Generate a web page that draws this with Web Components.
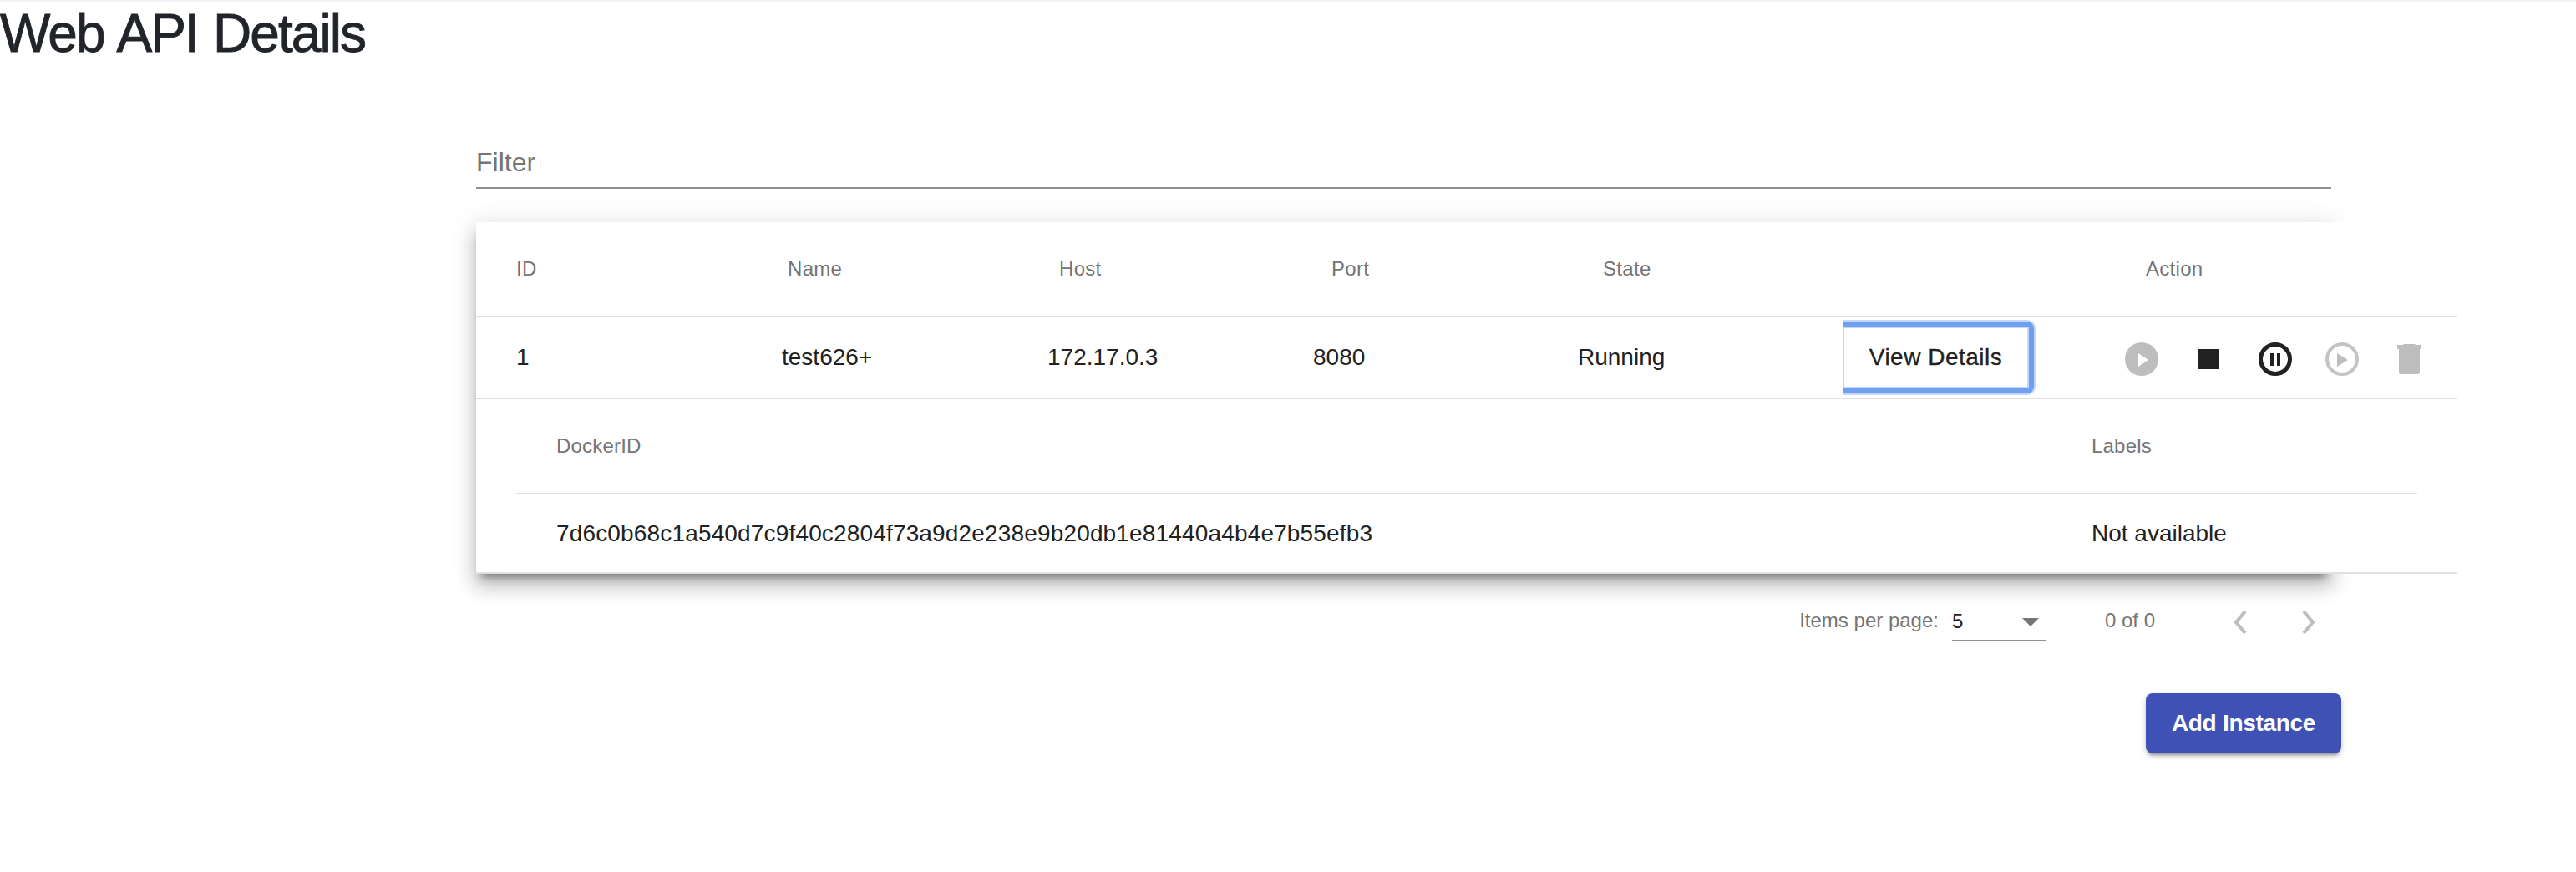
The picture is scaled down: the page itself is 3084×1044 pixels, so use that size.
<!DOCTYPE html>
<html>
<head>
<meta charset="utf-8">
<title>Web API Details</title>
<style>
  html, body { margin: 0; padding: 0; background: #fff; }
  body { font-family: "Liberation Sans", Arial, sans-serif; overflow: hidden; height: 1044px; border-top: 2px solid #f3f3f3; box-sizing: border-box; }
</style>
</head>
<body>
<page-title>Web API Details</page-title>
<instance-panel></instance-panel>

<script>
const ICONS = {
    play: '<svg width="40" height="40" viewBox="0 0 40 40"><circle cx="20" cy="20" r="20" fill="#bdbdbd"/><path d="M16 13l12 8-12 8z" fill="#fff"/></svg>',
    stop: '<svg width="40" height="40" viewBox="0 0 40 40"><rect x="8" y="8" width="24" height="24" fill="#212121"/></svg>',
    pause: '<svg width="40" height="40" viewBox="0 0 40 40"><circle cx="20" cy="20" r="17.5" fill="none" stroke="#212121" stroke-width="5"/><rect x="14" y="13" width="4" height="15" fill="#212121"/><rect x="22" y="13" width="4" height="15" fill="#212121"/></svg>',
    replay: '<svg width="40" height="40" viewBox="0 0 40 40"><circle cx="20" cy="20" r="18" fill="none" stroke="#c4c4c4" stroke-width="4"/><path d="M14 13l13 8-13 8z" fill="#bdbdbd"/></svg>',
    trash: '<svg width="40" height="40" viewBox="0 0 40 40"><path d="M6 8V3h7l1-1h13l1 1h7v5zM8 8h25v27a3 3 0 0 1-3 3H11a3 3 0 0 1-3-3z" fill="#bdbdbd"/></svg>',
    prev: '<svg width="20" height="30" viewBox="0 0 20 30"><path d="M16 2L5 15l11 13" fill="none" stroke="#bdbdbd" stroke-width="4"/></svg>',
    next: '<svg width="20" height="30" viewBox="0 0 20 30"><path d="M4 2l11 13L4 28" fill="none" stroke="#bdbdbd" stroke-width="4"/></svg>'
};

class PageTitle extends HTMLElement {
    constructor() {
        super();
        this.attachShadow({ mode: 'open' });
        this.shadowRoot.innerHTML = `
            <style>
                :host { display: block; height: 158px; }
                h1 {
                    margin: 0;
                    font: 400 64px/77px "Liberation Sans", Arial, sans-serif;
                    letter-spacing: -1.95px;
                    word-spacing: 2.5px;
                    -webkit-text-stroke: 0.9px #212529;
                    color: #212529;
                }
            </style>
            <h1><slot></slot></h1>
        `;
    }
}

class FilterField extends HTMLElement {
    constructor() {
        super();
        this.attachShadow({ mode: 'open' });
        this.shadowRoot.innerHTML = `
            <style>
                :host {
                    display: flex;
                    align-items: center;
                    box-sizing: border-box;
                    height: 66px;
                    padding-top: 4px;
                    border-bottom: 2px solid #8f8f8f;
                    font-size: 32px;
                    color: #757575;
                }
            </style>
            <span>Filter</span>
        `;
    }
}

class TableRow extends HTMLElement {
    constructor() {
        super();
        this.attachShadow({ mode: 'open' });
        const type = this.getAttribute('type');
        this.shadowRoot.innerHTML = `
            <style>
                :host {
                    display: flex;
                    align-items: center;
                    box-sizing: border-box;
                    width: 2372px;
                    padding: 0 48px;
                    background: #fff;
                    border-bottom: 2px solid #e0e0e0;
                    height: ${type === 'header' ? 114 : 98}px;
                    font-size: ${type === 'header' ? 24 : 28}px;
                    letter-spacing: ${type === 'header' ? 0.3 : 0}px;
                    color: ${type === 'header' ? '#757575' : '#212121'};
                }
            </style>
            <slot></slot>
        `;
    }
}

class TableCell extends HTMLElement {
    constructor() {
        super();
        this.attachShadow({ mode: 'open' });
        this.shadowRoot.innerHTML = `
            <style>
                :host { display: block; box-sizing: border-box; flex: 0 0 auto; }
            </style>
            <slot></slot>
        `;
        this.style.width = this.getAttribute('w') + 'px';
    }
}

class ActionIcon extends HTMLElement {
    constructor() {
        super();
        this.attachShadow({ mode: 'open' });
        this.shadowRoot.innerHTML = `
            <style>
                :host { display: block; width: 40px; height: 40px; }
                svg { display: block; }
            </style>
            ${ICONS[this.getAttribute('name')]}
        `;
    }
}

class ActionGroup extends HTMLElement {
    constructor() {
        super();
        this.attachShadow({ mode: 'open' });
        this.shadowRoot.innerHTML = `
            <style>
                :host { display: flex; gap: 40px; padding-top: 4px; }
            </style>
            <slot></slot>
        `;
    }
}

class DetailsButton extends HTMLElement {
    constructor() {
        super();
        this.attachShadow({ mode: 'open' });
        this.shadowRoot.innerHTML = `
            <style>
                :host {
                    display: block;
                    box-sizing: border-box;
                    width: 231px;
                    height: 90px;
                    border: 2px solid #c3d7f8;
                    border-left: 0;
                    border-radius: 0 10px 10px 0;
                    font-size: 28px;
                    letter-spacing: 0.5px;
                    -webkit-text-stroke: 0.3px #212121;
                    color: #212121;
                }
                .ring {
                    box-sizing: border-box;
                    height: 100%;
                    border: 6px solid #6f9ff0;
                    border-left: 0;
                    border-radius: 0 8px 8px 0;
                }
                .face {
                    display: flex;
                    align-items: center;
                    justify-content: center;
                    box-sizing: border-box;
                    height: 100%;
                    background: #fff;
                    border: 2px solid #c3d7f8;
                }
            </style>
            <div class="ring"><div class="face"><slot></slot></div></div>
        `;
    }
}

class DetailPanel extends HTMLElement {
    constructor() {
        super();
        this.attachShadow({ mode: 'open' });
        this.shadowRoot.innerHTML = `
            <style>
                :host {
                    display: block;
                    box-sizing: border-box;
                    width: 2372px;
                    height: 209px;
                    padding: 0 48px;
                    background: #fff;
                    border-bottom: 2px solid #e0e0e0;
                }
                .line {
                    display: flex;
                    align-items: center;
                    padding-left: 48px;
                }
                .name { flex: 0 0 1838px; }
                .head { height: 112px; border-bottom: 2px solid #e0e0e0; font-size: 24px; letter-spacing: 0.2px; color: #757575; }
                .value { height: 93px; font-size: 28px; color: #212121; }
                .hash { letter-spacing: 0.16px; }
            </style>
            <div class="line head"><div class="name">DockerID</div><div>Labels</div></div>
            <div class="line value">
                <div class="name hash">7d6c0b68c1a540d7c9f40c2804f73a9d2e238e9b20db1e81440a4b4e7b55efb3</div>
                <div>Not available</div>
            </div>
        `;
    }
}

class TablePaginator extends HTMLElement {
    constructor() {
        super();
        this.attachShadow({ mode: 'open' });
        this.shadowRoot.innerHTML = `
            <style>
                :host {
                    display: flex;
                    justify-content: flex-end;
                    align-items: center;
                    height: 112px;
                    padding-right: 17px;
                    font-size: 24px;
                    color: #757575;
                    box-sizing: border-box;
                }
                .select {
                    position: relative;
                    box-sizing: border-box;
                    width: 112px;
                    height: 48px;
                    margin: 2px 71px 0 16px;
                    padding-top: 10px;
                    border-bottom: 2px solid #8f8f8f;
                    color: #212121;
                }
                .select i {
                    position: absolute;
                    right: 8px;
                    top: 20px;
                    border: 10px solid transparent;
                    border-top-color: #757575;
                    border-bottom: 0;
                }
                .range { margin-right: 92px; }
                .next { margin-left: 62px; }
                .arrows { display: flex; margin-top: 4px; }
                svg { display: block; }
            </style>
            <span>Items per page:</span>
            <div class="select">5<i></i></div>
            <span class="range">0 of 0</span>
            <div class="arrows">
                ${ICONS.prev}
                <div class="next">${ICONS.next}</div>
            </div>
        `;
    }
}

class RaisedButton extends HTMLElement {
    constructor() {
        super();
        this.attachShadow({ mode: 'open' });
        this.shadowRoot.innerHTML = `
            <style>
                :host {
                    display: inline-flex;
                    align-items: center;
                    justify-content: center;
                    width: 234px;
                    height: 72px;
                    border-radius: 8px;
                    background: #3f51b5;
                    color: #fff;
                    font-weight: 700;
                    font-size: 28px;
                    letter-spacing: -0.3px;
                    box-shadow: 0 6px 2px -4px rgba(0,0,0,.2), 0 4px 4px 0 rgba(0,0,0,.14), 0 2px 10px 0 rgba(0,0,0,.12);
                }
            </style>
            <slot></slot>
        `;
    }
}

class InstancePanel extends HTMLElement {
    constructor() {
        super();
        this.attachShadow({ mode: 'open' });
        this.shadowRoot.innerHTML = `
            <style>
                :host { display: block; width: 2221px; margin-left: 570px; }
                .card {
                    height: 421px;
                    margin-top: 40px;
                    background: #fff;
                    box-shadow: 0 10px 10px -6px rgba(0,0,0,.4), 0 16px 20px 2px rgba(0,0,0,.14), 0 6px 28px 4px rgba(0,0,0,.12);
                }
                .footer {
                    display: flex;
                    justify-content: flex-end;
                    margin-top: 31px;
                    margin-right: -12px;
                }
            </style>
            <filter-field></filter-field>
            <div class="card">
                <table-row type="header">
                    <table-cell w="325">ID</table-cell>
                    <table-cell w="325">Name</table-cell>
                    <table-cell w="326">Host</table-cell>
                    <table-cell w="325">Port</table-cell>
                    <table-cell w="650">State</table-cell>
                    <table-cell w="325">Action</table-cell>
                </table-row>
                <table-row>
                    <table-cell w="318">1</table-cell>
                    <table-cell w="318">test626+</table-cell>
                    <table-cell w="318">172.17.0.3</table-cell>
                    <table-cell w="317">8080</table-cell>
                    <table-cell w="317">Running</table-cell>
                    <table-cell w="338"><details-button>View Details</details-button></table-cell>
                    <table-cell w="370">
                        <action-group>
                            <action-icon name="play"></action-icon>
                            <action-icon name="stop"></action-icon>
                            <action-icon name="pause"></action-icon>
                            <action-icon name="replay"></action-icon>
                            <action-icon name="trash"></action-icon>
                        </action-group>
                    </table-cell>
                </table-row>
                <detail-panel></detail-panel>
            </div>
            <table-paginator></table-paginator>
            <div class="footer"><raised-button>Add Instance</raised-button></div>
        `;
    }
}

customElements.define('page-title', PageTitle);
customElements.define('filter-field', FilterField);
customElements.define('table-row', TableRow);
customElements.define('table-cell', TableCell);
customElements.define('action-icon', ActionIcon);
customElements.define('action-group', ActionGroup);
customElements.define('details-button', DetailsButton);
customElements.define('detail-panel', DetailPanel);
customElements.define('table-paginator', TablePaginator);
customElements.define('raised-button', RaisedButton);
customElements.define('instance-panel', InstancePanel);
</script>
</body>
</html>
